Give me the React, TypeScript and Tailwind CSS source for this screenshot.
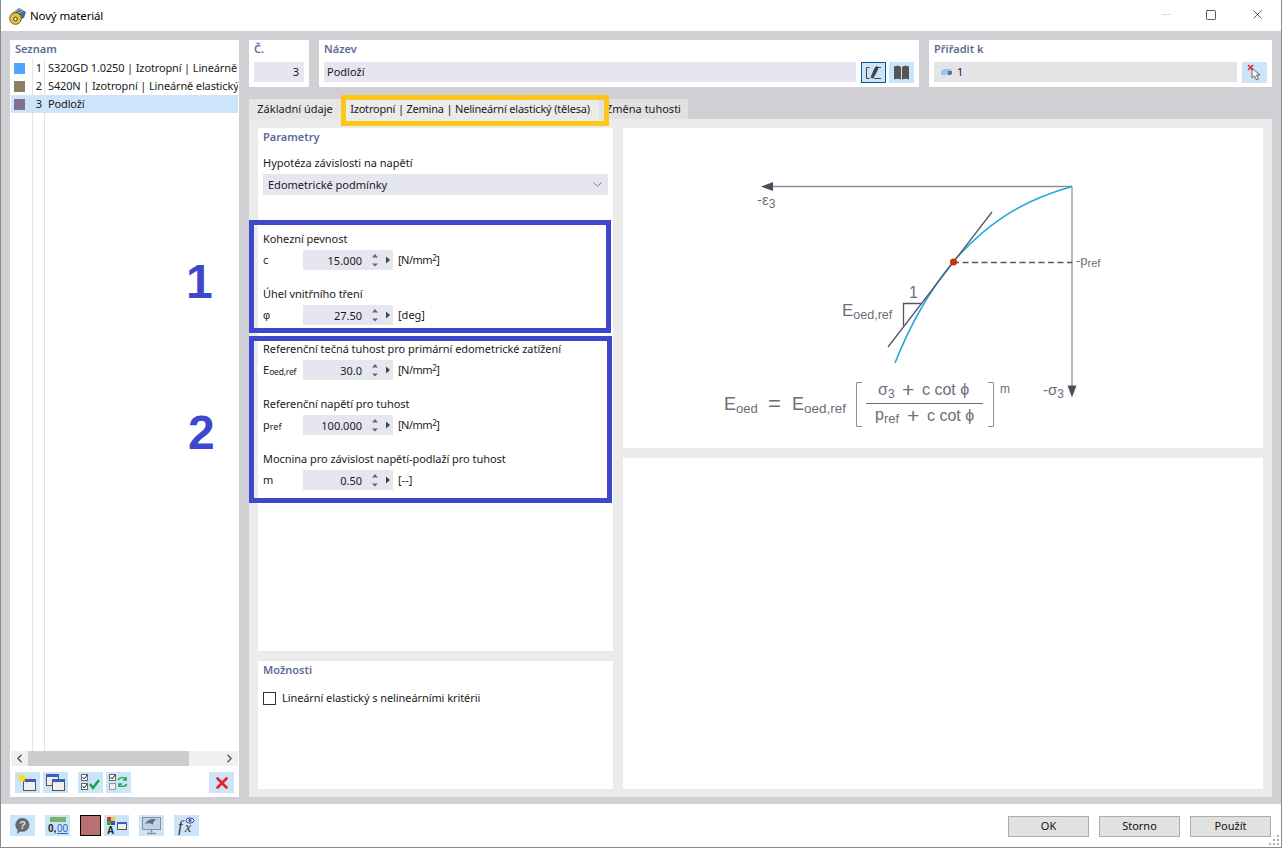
import React from "react";
import { ChevronDown, ChevronLeft, ChevronRight, Minus, Square, X } from "lucide-react";

const IconBtn = ({ children, className = "" }: { children: React.ReactNode; className?: string }) => (
  <div className={`flex h-[21px] w-[25px] items-center justify-center bg-[#cce4f7] ${className}`}>{children}</div>
);

const NewWindowIcon = () => (
  <svg width="21" height="19" viewBox="0 0 21 19">
    <rect x="6.5" y="6.5" width="12" height="11" fill="#f0f0f0" stroke="#555" />
    <rect x="6" y="6" width="13" height="3" fill="#3a5bc0" />
    <path d="M5 0l1.2 2.8L9 1.6 7.6 4.4 10.4 5.6 7.4 6.4 8 9.4 5 7.6 2 9.4l.6-3L0 5.6l2.4-1.2L1 1.6l2.8 1.2z" fill="#f7e11e" />
  </svg>
);

const CopyWindowIcon = () => (
  <svg width="21" height="19" viewBox="0 0 21 19">
    <rect x="1.5" y="1.5" width="12" height="11" fill="#eee" stroke="#555" />
    <rect x="1" y="1" width="13" height="3" fill="#3a5bc0" />
    <rect x="7.5" y="6.5" width="12" height="11" fill="#f0f0f0" stroke="#555" />
    <rect x="7" y="6" width="13" height="3" fill="#3a5bc0" />
  </svg>
);

const CheckAllIcon = () => (
  <svg width="21" height="19" viewBox="0 0 21 19">
    <rect x="1.5" y="1.5" width="6" height="6" fill="#fff" stroke="#666" />
    <path d="M2.5 4l1.8 2L7 2" fill="none" stroke="#222" />
    <rect x="1.5" y="10.5" width="6" height="6" fill="#fff" stroke="#666" />
    <path d="M2.5 13l1.8 2L7 11" fill="none" stroke="#222" />
    <path d="M10 11l3 4 6-8" fill="none" stroke="#16a34a" strokeWidth="2.4" />
  </svg>
);

const CheckSwapIcon = () => (
  <svg width="21" height="19" viewBox="0 0 21 19">
    <rect x="1.5" y="1.5" width="6" height="6" fill="#fff" stroke="#666" />
    <path d="M2.5 4l1.8 2L7 2" fill="none" stroke="#222" />
    <rect x="1.5" y="10.5" width="6" height="6" fill="#eee" stroke="#999" />
    <path d="M10 7c2-3 6-3 8-1M18 4v3h-3" fill="none" stroke="#16a34a" strokeWidth="1.4" />
    <path d="M19 11c-2 3-6 3-8 1M11 14v-3h3" fill="none" stroke="#16a34a" strokeWidth="1.4" />
  </svg>
);

const Spin = () => (
  <div className="flex w-[31px] items-center">
    <svg width="10" height="14" viewBox="0 0 10 14" className="ml-[8px]">
      <path d="M5 1L8 4.4H2z" fill="#666" />
      <path d="M5 13.4L8 10.4H2z" fill="#666" />
    </svg>
    <svg width="6" height="8" viewBox="0 0 6 8" className="ml-[5px]">
      <path d="M1 0.5L5 4L1 7.5z" fill="#444" />
    </svg>
  </div>
);

const sup2 = <sup className="relative top-[1px] align-super text-[8px] leading-none">2</sup>;
const nmm = <span className="tracking-[-0.5px]">[N/mm{sup2}]</span>;

const NumberField = ({ symbol, value, unit }: { symbol: React.ReactNode; value: string; unit: React.ReactNode }) => (
  <div className="mt-px flex h-5 items-center">
    <div className="w-10 pt-px">{symbol}</div>
    <div className="flex h-5 w-[90px] items-center justify-end bg-[#e6e6f0]">
      <span className="pt-px leading-5">{value}</span>
      <Spin />
    </div>
    <div className="ml-[5px] pt-px">{unit}</div>
  </div>
);

const Field = ({ label, ...rest }: { label: string; symbol: React.ReactNode; value: string; unit: React.ReactNode }) => (
  <div className="flex flex-col">
    <div className="flex h-5 items-center tracking-[-0.05px]">{label}</div>
    <NumberField {...rest} />
  </div>
);

const ListRow = ({ color, n, text, active }: { color: string; n: number; text: string; active?: boolean }) => (
  <div className={`flex h-[18px] items-center overflow-hidden whitespace-nowrap ${active ? "bg-[#cce5fb]" : ""}`}>
    <div className="ml-[3px] h-[11px] w-[11px] shrink-0" style={{ backgroundColor: color }} />
    <div className="w-[17px] shrink-0 pt-px text-right">{n}</div>
    <div className="ml-[6px] pt-px tracking-[-0.14px]">{text}</div>
  </div>
);

const Diagram = () => (
  <svg width="640" height="320" viewBox="623 128 640 320" fontFamily="'Liberation Sans', sans-serif" fill="#6d6d7b">
    <line x1="1072" y1="186.5" x2="770" y2="186.5" stroke="#8f8f9c" strokeWidth="1.3" />
    <path d="M761 186.5l12-4.5v9z" fill="#4d4d5e" />
    <line x1="1072" y1="186.5" x2="1072" y2="388" stroke="#8f8f9c" strokeWidth="1.3" />
    <path d="M1072 397.5l-4.5-12h9z" fill="#4d4d5e" />
    <path d="M1072 186.5C1020 201 985 225 953 262C930 290 910 325 895 363" fill="none" stroke="#1ea7dd" strokeWidth="1.6" />
    <line x1="992" y1="212" x2="888" y2="347" stroke="#55556a" strokeWidth="1.3" />
    <line x1="953" y1="262.5" x2="1072" y2="262.5" stroke="#55556a" strokeWidth="1.4" strokeDasharray="6 3.5" />
    <circle cx="953.5" cy="262" r="3.5" fill="#c8300c" />
    <path d="M921.5 303.5H903.5V326" fill="none" stroke="#55556a" strokeWidth="1.3" />
    <text x="909" y="298" fontSize="16">1</text>
    <text x="842" y="316" fontSize="17">E<tspan fontSize="12.5" dy="3">oed,ref</tspan></text>
    <text x="757" y="205" fontSize="15">-ε<tspan fontSize="12" dy="3">3</tspan></text>
    <text x="1076" y="265" fontSize="13">-p<tspan fontSize="11" dy="2">ref</tspan></text>
    <text x="1043" y="395" fontSize="15">-σ<tspan fontSize="12" dy="3">3</tspan></text>
    <text x="724" y="410" fontSize="18">E<tspan fontSize="13" dy="3">oed</tspan></text>
    <text x="768" y="411" fontSize="22">=</text>
    <text x="792" y="410" fontSize="18">E<tspan fontSize="13.5" dy="3">oed,ref</tspan></text>
    <path d="M862 382.5H856.5V426.5H862" fill="none" stroke="#8f8f9c" />
    <path d="M988 382.5H993.5V426.5H988" fill="none" stroke="#8f8f9c" />
    <line x1="866" y1="403.5" x2="983" y2="403.5" stroke="#6d6d7b" />
    <text x="878" y="395" fontSize="16">σ<tspan fontSize="12" dy="3">3</tspan></text>
    <text x="902" y="397" fontSize="21">+</text>
    <text x="922" y="395" fontSize="16">c cot ϕ</text>
    <text x="875" y="420" fontSize="16">p<tspan fontSize="13" dy="3">ref</tspan></text>
    <text x="907" y="423" fontSize="21">+</text>
    <text x="927" y="421" fontSize="16">c cot ϕ</text>
    <text x="1000" y="393" fontSize="12">m</text>
  </svg>
);

export default function App() {
  return (
    <div className="relative flex h-[848px] w-[1282px] flex-col overflow-hidden border-x border-b border-[#8a8a8a] bg-white font-['Noto_Sans',sans-serif] text-[11px] text-[#1a1a1a]">
      {/* title bar */}
      <div className="flex h-[31px] shrink-0 items-center">
        <svg width="18" height="18" viewBox="0 0 18 18" className="ml-[8px]">
          <path d="M2 7l8-6 7 4-2 6-6 2z" fill="#4e6d8c" />
          <path d="M5 5l7-3M7 7l7-3" stroke="#a9c0d6" />
          <circle cx="6.5" cy="11.5" r="5.8" fill="#e8c33a" stroke="#6b5a1a" />
          <circle cx="6.5" cy="12" r="1.8" fill="#fff" stroke="#3a3010" />
        </svg>
        <div className="ml-[3px] text-[11.5px] tracking-[-0.15px] text-black">Nový materiál</div>
        <div className="ml-auto flex items-center pb-[2px] text-[#111]">
          <Minus size={13} className="mr-[32px] text-[#b8b8b8]" strokeWidth={1} />
          <Square size={12} className="mr-[33px]" strokeWidth={1.4} />
          <X size={15} className="mr-[16px]" strokeWidth={1.1} />
        </div>
      </div>

      {/* main */}
      <div className="flex min-h-0 flex-1 gap-[10px] bg-[#d0d0d4] pb-[7px] pl-[9px] pr-[9px] pt-[9px]">
        {/* list panel */}
        <div className="flex w-[229px] shrink-0 flex-col bg-white px-px">
          <div className="flex h-[18px] items-center px-[4px] font-semibold text-[#5a6c96]">Seznam</div>
          <div className="relative min-h-0 flex-1">
            <div className="absolute bottom-0 left-[21px] top-0 w-px bg-[#e4e4e4]" />
            <div className="absolute bottom-0 left-[33px] top-0 w-px bg-[#e4e4e4]" />
            <div className="relative pt-px">
              <ListRow color="#4da6ff" n={1} text="S320GD 1.0250 | Izotropní | Lineárně elastický" />
              <ListRow color="#8f7d66" n={2} text="S420N | Izotropní | Lineárně elastický" />
              <ListRow color="#83708f" n={3} text="Podloží" active />
            </div>
          </div>
          <div className="flex h-[15px] items-center bg-[#f0f0f0]">
            <div className="flex w-[17px] justify-center"><ChevronLeft size={13} strokeWidth={3} className="text-[#606060]" /></div>
            <div className="h-[15px] w-[161px] bg-[#cdcdcd]" />
            <div className="ml-auto flex w-[17px] justify-center"><ChevronRight size={13} strokeWidth={3} className="text-[#606060]" /></div>
          </div>
          <div className="flex h-[31px] items-start px-[4px] pt-[6px]">
            <IconBtn><NewWindowIcon /></IconBtn>
            <IconBtn className="ml-[3px]"><CopyWindowIcon /></IconBtn>
            <IconBtn className="ml-[10px]"><CheckAllIcon /></IconBtn>
            <IconBtn className="ml-[3px]"><CheckSwapIcon /></IconBtn>
            <IconBtn className="ml-auto">
              <X size={18} strokeWidth={3.6} className="text-[#e8212a]" />
            </IconBtn>
          </div>
        </div>

        {/* right side */}
        <div className="flex min-w-0 flex-1 flex-col">
          <div className="flex h-[47px] shrink-0 gap-[10px]">
            <div className="w-[60px] bg-white px-[5px]">
              <div className="mb-[4px] flex h-[18px] items-center font-semibold text-[#5a6c96]">Č.</div>
              <div className="flex h-5 items-center justify-end bg-[#e6e6f0] px-[5px]">3</div>
            </div>
            <div className="w-[600px] bg-white px-[5px]">
              <div className="mb-[4px] flex h-[18px] items-center font-semibold text-[#5a6c96]">Název</div>
              <div className="flex items-start">
                <div className="flex h-5 flex-1 items-center bg-[#e6e6f0] px-[3px]">Podloží</div>
                <div className="ml-[5px] flex h-[21px] w-[25px] items-center justify-center border-[1.5px] border-[#005a9e] bg-[#cce4f7]">
                  <svg width="17" height="15" viewBox="0 0 17 15" fill="none" stroke="#444">
                    <path d="M4.5 2.5H1.5V13.5H4.5M9 13.5H16" />
                    <path d="M6 12.5L10 3l1.6-1.5 1.4.8-.3 2L8 13z" fill="#444" />
                    <path d="M13 2.5h3" />
                  </svg>
                </div>
                <div className="ml-[3px] flex h-[21px] w-[25px] items-center justify-center bg-[#cce4f7]">
                  <svg width="17" height="15" viewBox="0 0 17 15">
                    <path d="M1 1.5c2-1 5-1 7 .5v12.5c-2-1-5-1-7 0zM9 2c2-1.5 5-1.5 7-.5v13c-2-1-5-1-7 0z" fill="#555" />
                  </svg>
                </div>
              </div>
            </div>
            <div className="flex-1 bg-white px-[5px]">
              <div className="mb-[4px] flex h-[18px] items-center font-semibold text-[#5a6c96]">Přiřadit k</div>
              <div className="flex items-start">
                <div className="flex h-5 flex-1 items-center bg-[#e4e4e4] pl-[7px]">
                  <svg width="11" height="8" viewBox="0 0 11 8">
                    <path d="M0 3l3-2h8l-2 2v4H0z" fill="#9cc4ec" />
                    <path d="M7 3h4v3l-2 1H7z" fill="#4a76a8" />
                  </svg>
                  <span className="ml-[5px] text-[#2a0a4a]">1</span>
                </div>
                <div className="ml-[5px] flex h-[21px] w-[25px] items-center justify-center bg-[#cce4f7]">
                  <svg width="15" height="17" viewBox="0 0 15 17">
                    <path d="M5 4v10l2.5-2 2 4 2-1-2-4H13z" fill="#f4f4f4" stroke="#666" />
                    <path d="M1 1l5 5M6 1L1 6" stroke="#e8212a" strokeWidth="1.6" />
                  </svg>
                </div>
              </div>
            </div>
          </div>

          {/* tabs */}
          <div className="mt-[12px] flex h-5 shrink-0 items-center">
            <div className="flex h-5 w-[92px] items-center justify-center bg-[#e6e6e6] pt-px">Základní údaje</div>
            <div className="flex h-5 w-[258px] items-center justify-center bg-[#ebebeb] pt-px tracking-[-0.2px]">Izotropní | Zemina | Nelineární elastický (tělesa)</div>
            <div className="flex h-5 w-[89px] items-center justify-center bg-[#e1e1e1] pt-px">Změna tuhosti</div>
          </div>

          {/* tab content */}
          <div className="flex min-h-0 flex-1 gap-[10px] bg-[#ebebeb] px-[9px] pb-[8px] pt-[9px]">
            <div className="flex w-[355px] shrink-0 flex-col gap-[10px]">
              <div className="flex-1 bg-white px-[5px]">
                <div className="flex h-[19px] items-center font-semibold text-[#5a6c96]">Parametry</div>
                <div className="mt-[6px] flex h-5 items-center">Hypotéza závislosti na napětí</div>
                <div className="mt-px flex h-[21px] items-center justify-between bg-[#e6e6f0] pl-[5px] pr-[3px]">
                  <span className="pt-px">Edometrické podmínky</span>
                  <ChevronDown size={15} strokeWidth={1.2} className="text-[#555]" />
                </div>
                <div className="mt-[34px] flex flex-col gap-[14px]">
                  <Field label="Kohezní pevnost" symbol="c" value="15.000" unit={nmm} />
                  <Field label="Úhel vnitřního tření" symbol={<span className="font-['Liberation_Sans',sans-serif]">φ</span>} value="27.50" unit="[deg]" />
                  <Field
                    label="Referenční tečná tuhost pro primární edometrické zatížení"
                    symbol={<>E<span className="relative top-px text-[8.5px] tracking-[-0.2px]">oed,ref</span></>}
                    value="30.0"
                    unit={nmm}
                  />
                  <Field
                    label="Referenční napětí pro tuhost"
                    symbol={<>p<span className="relative top-px text-[9px]">ref</span></>}
                    value="100.000"
                    unit={nmm}
                  />
                  <Field label="Mocnina pro závislost napětí-podlaží pro tuhost" symbol="m" value="0.50" unit="[--]" />
                </div>
              </div>
              <div className="h-[128px] shrink-0 bg-white px-[5px]">
                <div className="flex h-[19px] items-center font-semibold text-[#5a6c96]">Možnosti</div>
                <div className="mt-[10px] flex items-center">
                  <div className="h-[13px] w-[13px] border border-[#333] bg-white" />
                  <span className="ml-[6px] tracking-[-0.08px]">Lineární elastický s nelineárními kritérii</span>
                </div>
              </div>
            </div>
            <div className="flex min-w-0 flex-1 flex-col gap-[10px]">
              <div className="h-[320px] shrink-0 bg-white"><Diagram /></div>
              <div className="flex-1 bg-white" />
            </div>
          </div>
        </div>
      </div>

      {/* footer */}
      <div className="flex h-[43px] shrink-0 items-center pl-[9px] pr-[10px]">
        <IconBtn>
          <svg width="19" height="19" viewBox="0 0 19 19">
            <path d="M9.5 2a7 7 0 017 7 7 7 0 01-9 6.5L4 18l.5-4A7 7 0 019.5 2z" fill="#6b6b6b" />
            <text x="9.5" y="13" textAnchor="middle" fontSize="11" fontWeight="700" fill="#cce4f7" fontFamily="'Liberation Sans', sans-serif">?</text>
          </svg>
        </IconBtn>
        <IconBtn className="ml-[10px]">
          <svg width="21" height="19" viewBox="0 0 21 19" fontFamily="'Liberation Sans', sans-serif">
            <rect x="3" y="1" width="16" height="5" fill="#7fb069" />
            <text x="1" y="16" fontSize="10" fontWeight="700" fill="#222">0,</text>
            <text x="10" y="16" fontSize="10" fill="#2563c9" textDecoration="underline">00</text>
          </svg>
        </IconBtn>
        <div className="ml-[10px] h-[21px] w-[21px] border-[1.5px] border-black bg-[#b87070]" />
        <IconBtn className="ml-[3px]">
          <svg width="21" height="19" viewBox="0 0 21 19" fontFamily="'Liberation Sans', sans-serif">
            <rect x="1" y="1" width="4" height="4" fill="#d33" />
            <rect x="5" y="1" width="4" height="4" fill="#ec3" />
            <rect x="1" y="5" width="4" height="4" fill="#3a3" />
            <rect x="5" y="5" width="4" height="4" fill="#35c" />
            <text x="1" y="18" fontSize="10" fontWeight="700" fill="#222">A</text>
            <rect x="11.5" y="6.5" width="9" height="7" fill="#eee" stroke="#555" />
            <rect x="11" y="6" width="10" height="2" fill="#3a5bc0" />
          </svg>
        </IconBtn>
        <IconBtn className="ml-[10px]">
          <svg width="21" height="19" viewBox="0 0 21 19">
            <rect x="1.5" y="1.5" width="18" height="12" fill="#c2d2e2" stroke="#8a8f98" />
            <path d="M4 8c3-5 8-6 12-4-3 0-4 2-4 5-2-2-5-2-8-1z" fill="#4f6f92" />
            <path d="M10.5 13.5v3M6 17.5h9" stroke="#8a8f98" strokeWidth="1.5" />
          </svg>
        </IconBtn>
        <IconBtn className="ml-[10px]">
          <svg width="21" height="19" viewBox="0 0 21 19" fontFamily="'Liberation Serif', serif">
            <text x="2" y="16" fontSize="16" fontStyle="italic" fill="#333">f</text>
            <text x="9" y="16" fontSize="14" fontStyle="italic" fill="#333">x</text>
            <ellipse cx="14" cy="4.5" rx="4" ry="2.6" fill="none" stroke="#4a4aa0" />
            <circle cx="14" cy="4.5" r="1.4" fill="#4a4aa0" />
          </svg>
        </IconBtn>
        <div className="ml-auto mt-px flex gap-[10px]">
          {["OK", "Storno", "Použít"].map((t) => (
            <div key={t} className="flex h-[21px] w-[81px] items-center justify-center border border-[#adadad] bg-[#e1e1e1] pt-px text-[#111]">
              {t}
            </div>
          ))}
        </div>
      </div>

      {/* annotation overlays */}
      <div className="pointer-events-none absolute left-[340px] top-[95px] h-[31px] w-[268px] border-[5px] border-[#ffc517]" />
      <div className="pointer-events-none absolute left-[248px] top-[220px] h-[113px] w-[362px] border-[5px] border-[#3f48cc]" />
      <div className="pointer-events-none absolute left-[248px] top-[336px] h-[167px] w-[363px] border-[5px] border-[#3f48cc]" />
      <div className="absolute left-[185px] top-[252px] font-['Liberation_Sans',sans-serif] text-[48px] font-bold leading-[60px] text-[#3f48cc]">1</div>
      <div className="absolute left-[187px] top-[403px] font-['Liberation_Sans',sans-serif] text-[48px] font-bold leading-[60px] text-[#3f48cc]">2</div>
      <svg width="11" height="11" viewBox="0 0 11 11" className="absolute bottom-px right-px" fill="#b0b0b0">
        <rect x="8" y="0" width="2" height="2" />
        <rect x="4" y="4" width="2" height="2" />
        <rect x="8" y="4" width="2" height="2" />
        <rect x="0" y="8" width="2" height="2" />
        <rect x="4" y="8" width="2" height="2" />
        <rect x="8" y="8" width="2" height="2" />
      </svg>
    </div>
  );
}
